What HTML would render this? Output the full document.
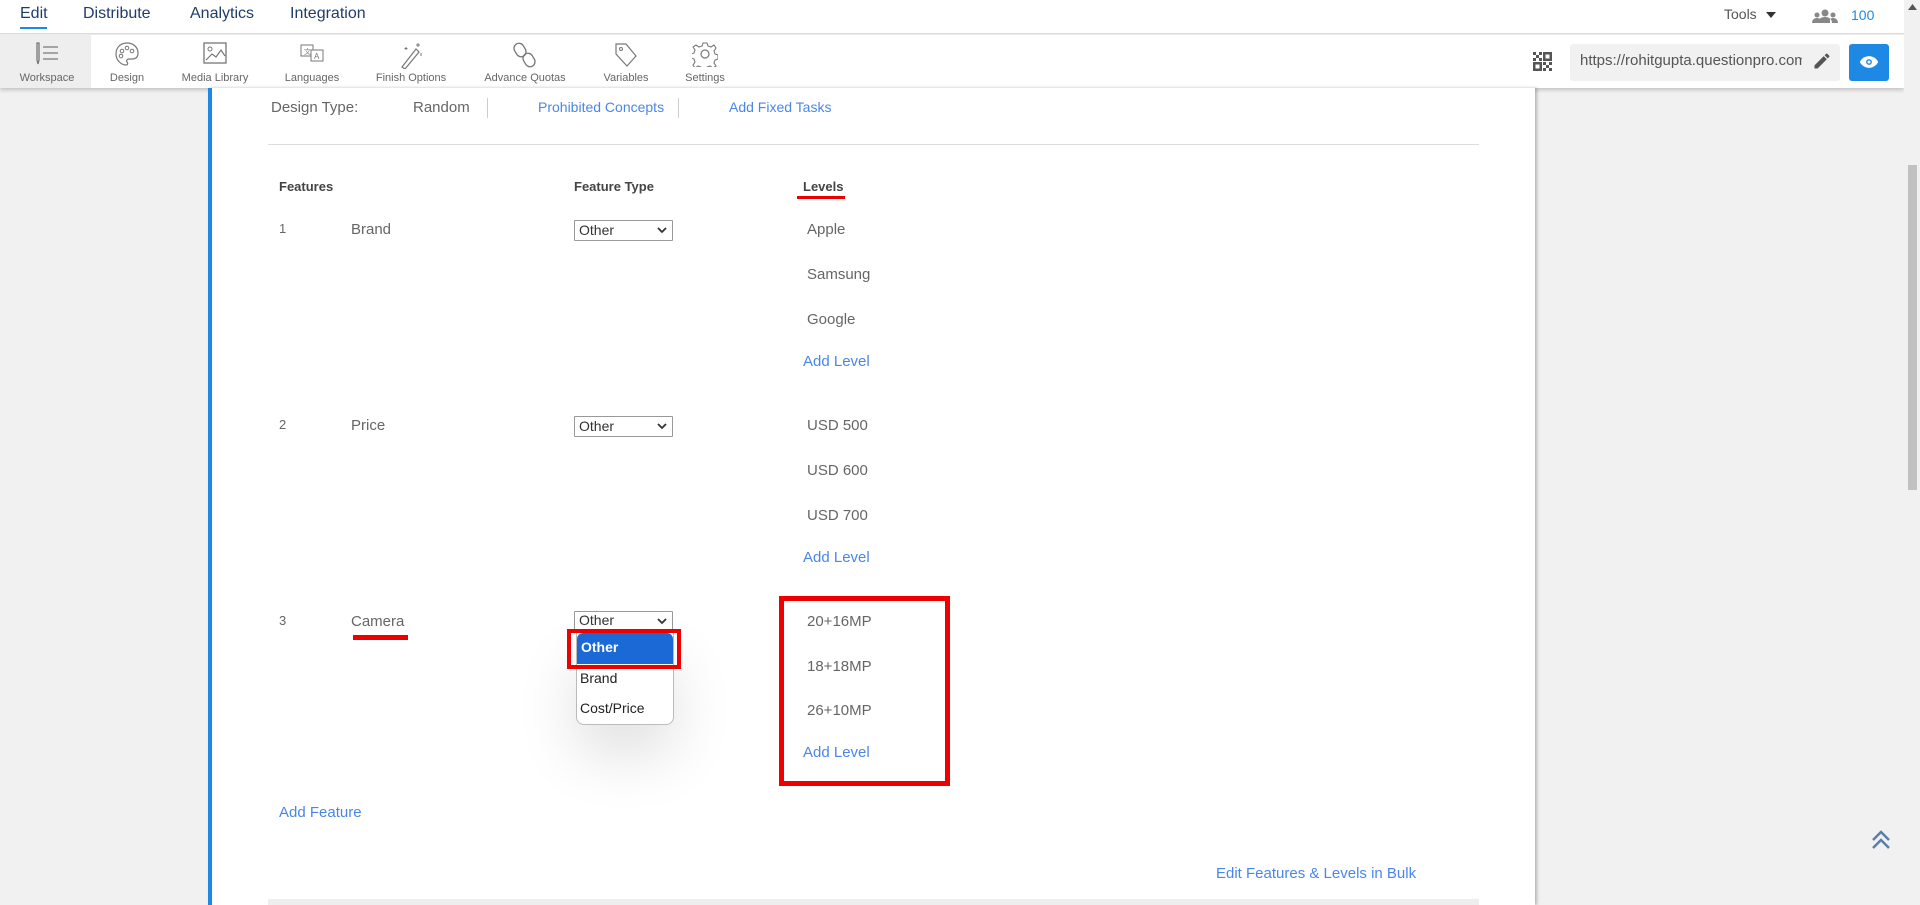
<!DOCTYPE html>
<html><head><meta charset="utf-8"><style>
*{margin:0;padding:0;box-sizing:border-box}
body{width:1920px;height:905px;overflow:hidden;background:#f1f1f1;font-family:"Liberation Sans",sans-serif;position:relative;color:#555}
.a{position:absolute;white-space:nowrap}
.top{left:0;top:0;width:1904px;height:34px;background:#fff;border-bottom:1px solid #ddd}
.nav{font-size:16px;color:#1f3d6a;top:5px}
.tb{left:0;top:35px;width:1904px;height:53px;background:#fff;box-shadow:0 2px 4px rgba(0,0,0,.2)}
.lbl{font-size:11px;color:#666;top:72px;transform:translateX(-50%)}
.ic{top:41px;transform:translateX(-50%)}
.panel{left:208px;top:88px;width:1327px;height:817px;background:#fff;border-left:4px solid #1e88e5;box-shadow:2px 0 3px rgba(0,0,0,.25)}
.t{font-size:15px;color:#666}
.b{font-size:13px;font-weight:bold;color:#444}
.lnk{font-size:14px;color:#4a86e8}
.sel{width:99px;height:21px;border:1px solid #999;background:#fff;font-size:14px;color:#333;padding:1px 4px;border-radius:1px}
.sel svg{position:absolute;right:5px;top:6px}
</style></head><body>
<div class="a top"></div>
<div class="a nav" style="left:20px;color:#1f3d6a">Edit</div>
<div class="a" style="left:20px;top:27px;width:27px;height:2px;background:#1e88e5"></div>
<div class="a nav" style="left:83px">Distribute</div>
<div class="a nav" style="left:190px">Analytics</div>
<div class="a nav" style="left:290px">Integration</div>
<div class="a" style="left:1724px;top:6px;font-size:14px;color:#555">Tools</div>
<svg class="a" style="left:1766px;top:12px" width="10" height="6"><path d="M0 0h10L5 6z" fill="#333"/></svg>
<svg class="a" style="left:1812px;top:9px" width="26" height="14" viewBox="0 0 26 14"><circle cx="13" cy="4" r="3.5" fill="#888"/><circle cx="5" cy="6" r="2.5" fill="#888"/><circle cx="21" cy="6" r="2.5" fill="#888"/><path d="M6 14c0-4 3-6 7-6s7 2 7 6z M0 14c0-3 2-5 5-5 2 0 3 1 3 1v4z M26 14c0-3-2-5-5-5-2 0-3 1-3 1v4z" fill="#888"/></svg>
<div class="a" style="left:1851px;top:7px;font-size:14px;color:#1e88e5">100</div>

<div class="a tb"></div>
<div class="a" style="left:0;top:35px;width:91px;height:53px;background:#eee"></div>
<svg class="a ic" style="left:47px" width="28" height="26" viewBox="0 0 28 26"><path d="M4 2v17l1 4 1-4V2z" fill="none" stroke="#777" stroke-width="1.3"/><path d="M10 6h15M10 12h15M10 18h15" stroke="#777" stroke-width="1.3"/></svg>
<svg class="a ic" style="left:127px" width="26" height="26" viewBox="0 0 26 26"><path d="M13 2C6 2 2 7 2 13s5 11 10 11c2 0 2-2 1-3s0-3 2-3h3c4 0 6-2 6-6C24 6 19 2 13 2z" fill="none" stroke="#777" stroke-width="1.2"/><circle cx="8" cy="10" r="1.8" fill="none" stroke="#777"/><circle cx="13" cy="7" r="1.8" fill="none" stroke="#777"/><circle cx="18" cy="10" r="1.8" fill="none" stroke="#777"/><circle cx="7" cy="15" r="1.8" fill="none" stroke="#777"/></svg>
<svg class="a ic" style="left:215px" width="26" height="24" viewBox="0 0 26 24"><rect x="2" y="2" width="22" height="20" fill="none" stroke="#777" stroke-width="1.3"/><circle cx="8" cy="8" r="2" fill="none" stroke="#777"/><path d="M4 19l6-6 4 3 5-7 4 6" fill="none" stroke="#777" stroke-width="1.2"/></svg>
<svg class="a ic" style="left:312px" width="28" height="24" viewBox="0 0 28 24"><rect x="3" y="4" width="12" height="11" fill="none" stroke="#777"/><rect x="13" y="9" width="12" height="11" fill="#fff" stroke="#777"/><text x="6" y="13" font-size="7" fill="#777">文</text><text x="16" y="18" font-size="8" fill="#777">A</text></svg>
<svg class="a ic" style="left:411px" width="26" height="28" viewBox="0 0 26 28"><path d="M4 26L18 8l3 3L7 28z" fill="none" stroke="#777" stroke-width="1.2"/><path d="M20 2v4M18 4h4M8 6v3M6.5 7.5h3M23 12v3" stroke="#777"/></svg>
<svg class="a ic" style="left:525px" width="26" height="28" viewBox="0 0 26 28"><rect x="3" y="2" width="10" height="14" rx="5" fill="none" stroke="#777" stroke-width="1.3" transform="rotate(-30 8 9)"/><rect x="12" y="12" width="10" height="14" rx="5" fill="none" stroke="#777" stroke-width="1.3" transform="rotate(-30 17 19)"/></svg>
<svg class="a ic" style="left:626px" width="26" height="28" viewBox="0 0 26 28"><path d="M3 3h10l10 12-9 10L3 13z" fill="none" stroke="#777" stroke-width="1.2"/><circle cx="8" cy="8" r="1.5" fill="none" stroke="#777"/></svg>
<svg class="a ic" style="left:705px" width="26" height="26" viewBox="0 0 26 26"><path d="M11 2h4l1 3 3 1 3-2 2 3-2 3 1 3 3 1v4l-3 1-1 3 2 3-3 2-3-2-3 1-1 3h-4l-1-3-3-1-3 2-2-3 2-3-1-3-3-1v-4l3-1 1-3-2-3 3-2 3 2 3-1z" fill="none" stroke="#777" stroke-width="1.1"/><circle cx="13" cy="13" r="4" fill="none" stroke="#777" stroke-width="1.2"/></svg>
<div class="a lbl" style="left:47px">Workspace</div>
<div class="a lbl" style="left:127px">Design</div>
<div class="a lbl" style="left:215px">Media Library</div>
<div class="a lbl" style="left:312px">Languages</div>
<div class="a lbl" style="left:411px">Finish Options</div>
<div class="a lbl" style="left:525px">Advance Quotas</div>
<div class="a lbl" style="left:626px">Variables</div>
<div class="a lbl" style="left:705px">Settings</div>

<svg class="a" style="left:1533px;top:52px" width="19" height="19" viewBox="0 0 19 19" fill="#555"><rect x="0" y="0" width="3" height="3"/><rect x="6" y="0" width="3" height="3"/><rect x="3" y="3" width="3" height="3"/><rect x="0" y="6" width="3" height="3"/><rect x="6" y="6" width="3" height="3"/><path d="M10 0h9v9h-9zM12.5 2.5v4h4v-4z" fill-rule="evenodd"/><path d="M0 10h9v9H0zM2.5 12.5v4h4v-4z" fill-rule="evenodd"/><rect x="10" y="10" width="3" height="3"/><rect x="16" y="10" width="3" height="3"/><rect x="13" y="13" width="3" height="3"/><rect x="10" y="16" width="3" height="3"/><rect x="16" y="16" width="3" height="3"/></svg>
<div class="a" style="left:1570px;top:44px;width:270px;height:37px;background:#f1f1f1;border-radius:3px"></div>
<div class="a" style="left:1580px;top:52px;font-size:15px;color:#555;width:222px;overflow:hidden">https://rohitgupta.questionpro.com/</div>
<svg class="a" style="left:1812px;top:51px" width="20" height="20" viewBox="0 0 24 24"><path d="M3 17.25V21h3.75L17.8 9.94l-3.75-3.75zM20.7 7.04a1 1 0 000-1.41l-2.34-2.34a1 1 0 00-1.41 0l-1.83 1.83 3.75 3.75z" fill="#555"/></svg>
<div class="a" style="left:1849px;top:44px;width:40px;height:37px;background:#1e88e5;border-radius:3px"></div>
<svg class="a" style="left:1859px;top:55px" width="20" height="14" viewBox="0 0 24 16"><path d="M12 1C7 1 3 4 1 8c2 4 6 7 11 7s9-3 11-7c-2-4-6-7-11-7z" fill="#fff"/><circle cx="12" cy="8" r="3.5" fill="#1e88e5"/><circle cx="12" cy="8" r="1.8" fill="#fff"/></svg>

<div class="a" style="left:1904px;top:0;width:16px;height:905px;background:#f1f1f1"></div>
<div class="a" style="left:1908px;top:165px;width:9px;height:325px;background:#c1c1c1"></div>
<svg class="a" style="left:1908px;top:4px" width="9" height="6"><path d="M0 6L4.5 0 9 6z" fill="#555"/></svg>

<div class="a panel"></div>
<div class="a t" style="left:271px;top:99px">Design Type:</div>
<div class="a t" style="left:413px;top:99px">Random</div>
<div class="a" style="left:487px;top:98px;width:1px;height:20px;background:#ccc"></div>
<div class="a lnk" style="left:538px;top:99px">Prohibited Concepts</div>
<div class="a" style="left:678px;top:98px;width:1px;height:20px;background:#ccc"></div>
<div class="a lnk" style="left:729px;top:99px">Add Fixed Tasks</div>
<div class="a" style="left:268px;top:144px;width:1211px;height:1px;background:#ddd"></div>

<div class="a b" style="left:279px;top:179px">Features</div>
<div class="a b" style="left:574px;top:179px">Feature Type</div>
<div class="a b" style="left:803px;top:179px">Levels</div>
<div class="a" style="left:797px;top:196px;width:48px;height:3px;background:#e00"></div>

<div class="a t" style="left:279px;top:221px;font-size:13px">1</div>
<div class="a t" style="left:351px;top:221px">Brand</div>
<div class="a sel" style="left:574px;top:220px">Other<svg width="10" height="7"><path d="M1 1l4 4 4-4" fill="none" stroke="#333" stroke-width="1.8"/></svg></div>
<div class="a t" style="left:807px;top:221px">Apple</div>
<div class="a t" style="left:807px;top:266px">Samsung</div>
<div class="a t" style="left:807px;top:311px">Google</div>
<div class="a lnk" style="left:803px;top:353px;font-size:15px">Add Level</div>

<div class="a t" style="left:279px;top:417px;font-size:13px">2</div>
<div class="a t" style="left:351px;top:417px">Price</div>
<div class="a sel" style="left:574px;top:416px">Other<svg width="10" height="7"><path d="M1 1l4 4 4-4" fill="none" stroke="#333" stroke-width="1.8"/></svg></div>
<div class="a t" style="left:807px;top:417px">USD 500</div>
<div class="a t" style="left:807px;top:462px">USD 600</div>
<div class="a t" style="left:807px;top:507px">USD 700</div>
<div class="a lnk" style="left:803px;top:549px;font-size:15px">Add Level</div>

<div class="a t" style="left:279px;top:613px;font-size:13px">3</div>
<div class="a t" style="left:351px;top:613px">Camera</div>
<div class="a" style="left:353px;top:635px;width:55px;height:5px;background:#e00"></div>
<div class="a sel" style="left:574px;top:611px;height:20px;padding-top:0">Other<svg width="10" height="7"><path d="M1 1l4 4 4-4" fill="none" stroke="#333" stroke-width="1.8"/></svg></div>
<div class="a" style="left:576px;top:632px;width:98px;height:93px;background:#fff;border:1px solid #bbb;border-radius:0 0 8px 8px;box-shadow:0 30px 60px rgba(0,0,0,.12)"></div>
<div class="a" style="left:577px;top:633px;width:96px;height:31px;background:#1a69d6;color:#fff;font-size:14px;font-weight:bold;padding:6px 4px;border-radius:6px 6px 0 0">Other</div>
<div class="a" style="left:567px;top:629px;width:114px;height:40px;border:4px solid #e00"></div>
<div class="a" style="left:580px;top:670px;font-size:14px;color:#222">Brand</div>
<div class="a" style="left:580px;top:700px;font-size:14px;color:#222">Cost/Price</div>
<div class="a t" style="left:807px;top:613px">20+16MP</div>
<div class="a t" style="left:807px;top:658px">18+18MP</div>
<div class="a t" style="left:807px;top:702px">26+10MP</div>
<div class="a lnk" style="left:803px;top:744px;font-size:15px">Add Level</div>
<div class="a" style="left:779px;top:596px;width:171px;height:190px;border:5px solid #e00"></div>

<div class="a lnk" style="left:279px;top:804px;font-size:15px">Add Feature</div>
<div class="a lnk" style="left:1216px;top:865px;font-size:15px">Edit Features &amp; Levels in Bulk</div>
<div class="a" style="left:268px;top:899px;width:1211px;height:6px;background:#eee"></div>

<svg class="a" style="left:1870px;top:829px" width="22" height="22" viewBox="0 0 22 22"><path d="M3 11l8-8 8 8M3 19l8-8 8 8" fill="none" stroke="#5b7fa8" stroke-width="2.5"/></svg>
</body></html>
